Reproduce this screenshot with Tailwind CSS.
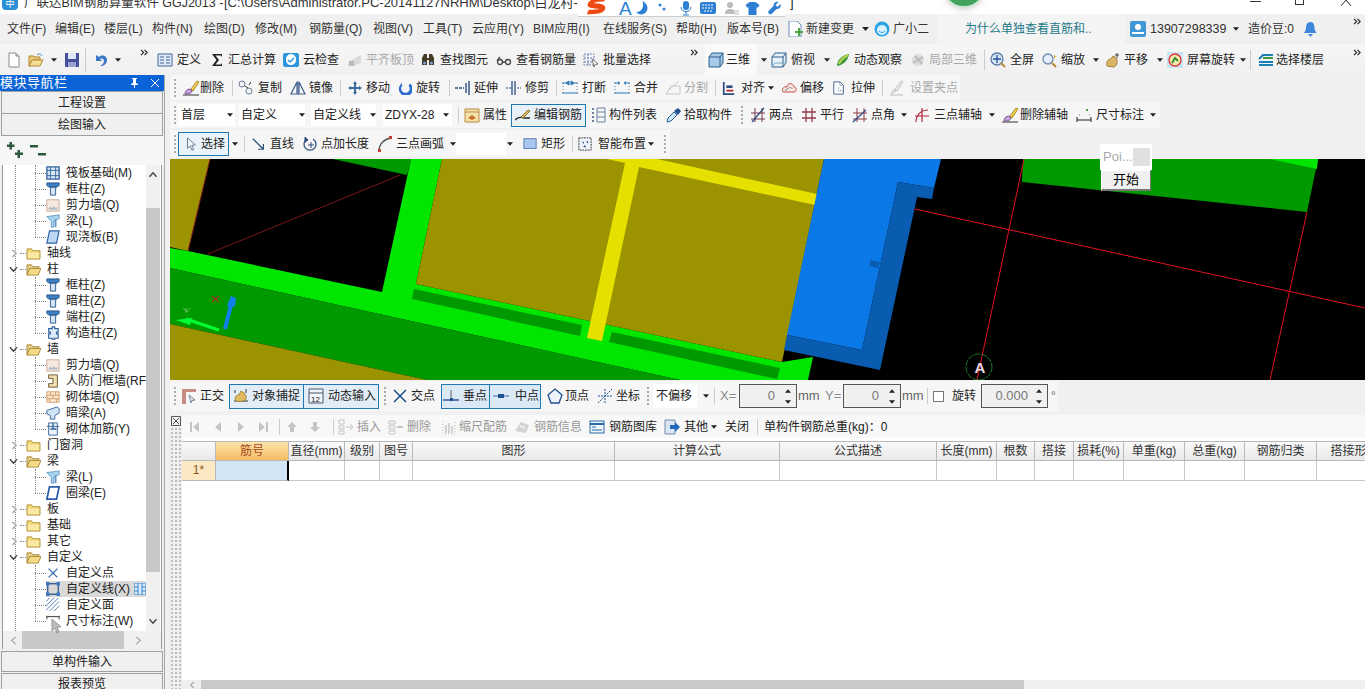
<!DOCTYPE html>
<html lang="zh">
<head>
<meta charset="UTF-8" />
<title>广联达BIM钢筋算量软件 GGJ2013</title>
<script src="https://cdn.jsdelivr.net/npm/@tailwindcss/browser@4"></script>
</head>
<body class="relative w-[1365px] h-[689px] overflow-hidden bg-[#f0f0f0] text-[12px] leading-4 text-[#222] font-['Liberation_Sans','Noto_Sans_CJK_SC',sans-serif]">

<svg class="hidden">
  <defs>
    <symbol id="caret" viewBox="0 0 7 4"><path d="M0 0h7L3.500 4z" fill="#222"/></symbol>
    <symbol id="more" viewBox="0 0 10 8"><path d="M1 1l3 3-3 3M5 1l3 3-3 3" fill="none" stroke="#222" stroke-width="1.300"/></symbol>
    <symbol id="grip" viewBox="0 0 3 20"><path d="M1 1v18" stroke="#aaa" stroke-width="2" stroke-dasharray="2 2"/></symbol>
    <symbol id="newfile" viewBox="0 0 16 16"><path d="M3 1h7l3 3v11H3z" fill="#fff" stroke="#8a8a8a"/><path d="M10 1v3h3" fill="#ddd" stroke="#8a8a8a"/></symbol>
    <symbol id="open" viewBox="0 0 16 16"><path d="M1 4h5l1 1h5v3H5L2 14H1z" fill="#e9c877" stroke="#b28a33"/><path d="M4 8h11l-3 6H1z" fill="#f6dd96" stroke="#b28a33"/><path d="M9 3c2-2 4-1 5 1" fill="none" stroke="#3f7fc0"/></symbol>
    <symbol id="save" viewBox="0 0 16 16"><path d="M1 1h14v14H1z" fill="#46509c"/><path d="M4 1h8v6H4z" fill="#dfe6f5"/><path d="M4 10h8v5H4z" fill="#9aa3d0"/></symbol>
    <symbol id="undo" viewBox="0 0 16 16"><path d="M3 3v6h6L7 7c2-1 4 0 4 2 0 2-2 4-4 5 4 0 7-2 7-6 0-4-5-6-8-3z" fill="#3a78c8"/></symbol>
    <symbol id="def" viewBox="0 0 16 16"><path d="M1 2h14v12H1z" fill="#dfe9f7" stroke="#41699c"/><path d="M3 5h4M3 8h4M3 11h4M9 5h4M9 8h4M9 11h4" stroke="#41699c"/></symbol>
    <symbol id="sigma" viewBox="0 0 16 16"><path d="M3 2h10v3l-1-1.500H6.500L10 8l-3.500 4.500H12l1-1.500v3H3l4.500-6z" fill="#222"/></symbol>
    <symbol id="cloudcheck" viewBox="0 0 16 16"><rect x="0" y="1" width="16" height="14" rx="2" fill="#2d95dc"/><path d="M3 7a5 5 0 0110 0 5 5 0 01-10 2z" fill="#fff"/><path d="M5 8l2 2 4-4" fill="none" stroke="#2d95dc" stroke-width="1.500"/></symbol>
    <symbol id="flat" viewBox="0 0 16 16"><path d="M1 13l6-6 8-4v8l-8 3z" fill="#d9d9d9"/><path d="M3 14V9h5v5z" fill="#bbb"/></symbol>
    <symbol id="binoc" viewBox="0 0 16 16"><path d="M2 6l2-4h3v4h2V2h3l2 4v7h-5V8H7v5H2z" fill="#453a24"/><circle cx="4.500" cy="11" r="1.500" fill="#78a4d8"/><circle cx="11.500" cy="11" r="1.500" fill="#78a4d8"/></symbol>
    <symbol id="glasses" viewBox="0 0 16 16"><circle cx="4" cy="10" r="2.500" fill="none" stroke="#444" stroke-width="1.300"/><circle cx="12" cy="10" r="2.500" fill="none" stroke="#444" stroke-width="1.300"/><path d="M6.500 10h3M1 9l3-4" stroke="#444" stroke-width="1.300"/></symbol>
    <symbol id="batch" viewBox="0 0 16 16"><path d="M1 2h10v11H1zM1 6h10M1 10h10M5 2v11" fill="#eef2fa" stroke="#7a86a8" stroke-dasharray="2 1"/><path d="M9 7l6 5-3 .5-1 2.500z" fill="#fff" stroke="#777"/></symbol>
    <symbol id="cube" viewBox="0 0 16 16"><path d="M1 5l3-4h11v10l-3 4H1z" fill="#a6cbe9" stroke="#2f5f8c"/><path d="M1 5h11v10M12 5l3-4" fill="none" stroke="#2f5f8c"/></symbol>
    <symbol id="cubev" viewBox="0 0 16 16"><path d="M1 5l3-4h11v10l-3 4H1z" fill="#e6f1fa" stroke="#2f5f8c"/><path d="M1 5h11v10M12 5l3-4" fill="none" stroke="#2f5f8c"/><path d="M1 15l3-4h11" fill="none" stroke="#7fa8c9"/></symbol>
    <symbol id="orbit" viewBox="0 0 16 16"><path d="M2 14c0-6 5-11 12-12-1 6-5 11-12 12z" fill="#3d9a3d"/><path d="M4 12c2-5 5-7 9-9" stroke="#b8d44c" stroke-width="2" fill="none"/></symbol>
    <symbol id="local3d" viewBox="0 0 16 16"><circle cx="8" cy="8" r="6" fill="#ddd"/><path d="M3 11L13 5M5 4l7 8" stroke="#bbb" stroke-width="2"/></symbol>
    <symbol id="zoomfit" viewBox="0 0 16 16"><circle cx="7" cy="7" r="6" fill="#d6e6f7" stroke="#5d7ba6" stroke-width="1.300"/><path d="M7 3v8M3 7h8" stroke="#24509a" stroke-width="1.300"/><path d="M11 11l4 4" stroke="#b88c2c" stroke-width="2"/></symbol>
    <symbol id="zoom" viewBox="0 0 16 16"><circle cx="6" cy="7" r="5" fill="#e5eefa" stroke="#6f88ad" stroke-width="1.300"/><path d="M10 11l4 4" stroke="#b88c2c" stroke-width="2"/><path d="M12 2l1 2 2 .500-2 .500-1 2z" fill="#d1a326"/></symbol>
    <symbol id="pan" viewBox="0 0 16 16"><path d="M2 14c-1-4 1-7 4-7l2-3 2 1 2 3v3c0 2-2 4-4 4z" fill="#d9b466" stroke="#a28334"/><path d="M12 1v5M10 3h4" stroke="#345" /></symbol>
    <symbol id="screenrot" viewBox="0 0 16 16"><rect x="0" y="0" width="16" height="16" fill="#c8e4f2"/><circle cx="8" cy="8" r="6" fill="#f4e8b0" stroke="#d33" stroke-width="1.300"/><path d="M5 11l3-5 3 3" stroke="#2f8f35" stroke-width="2" fill="none"/></symbol>
    <symbol id="floors" viewBox="0 0 16 16"><path d="M1 7l4-4h10M1 10h14M1 13h14" fill="none" stroke="#197fb4" stroke-width="2"/><path d="M5 6h10" stroke="#3f9a42" stroke-width="2"/></symbol>
    <symbol id="brush" viewBox="0 0 18 16"><path d="M1 15h16" stroke="#333"/><path d="M3 14c0-3 2-5 5-5l2 2c0 2-3 3-7 3z" fill="#c9a1dd" stroke="#7e579b"/><path d="M9 9l6-8 2 1-6 9z" fill="#f2d24f" stroke="#a88a2c"/></symbol>
    <symbol id="copy" viewBox="0 0 16 16"><circle cx="4" cy="4" r="3" fill="none" stroke="#6b7d99"/><circle cx="11" cy="11" r="3" fill="none" stroke="#6b7d99"/><path d="M7 6l3 2M13 2l-2 3" stroke="#333"/></symbol>
    <symbol id="mirror" viewBox="0 0 16 16"><path d="M7 2L1 14h6zM9 2l6 12H9z" fill="none" stroke="#3f5f90" stroke-width="1.200"/><path d="M8 1v14" stroke="#3f5f90"/></symbol>
    <symbol id="move" viewBox="0 0 16 16"><path d="M8 1l2 3H9v3h3V6l3 2-3 2V9H9v3h1l-2 3-2-3h1V9H4v1L1 8l3-2v1h3V4H6z" fill="#3a6c99"/></symbol>
    <symbol id="rotate" viewBox="0 0 16 16"><path d="M4 2l1 3a5 5 0 107 0l2-2a8 8 0 11-11 1z" fill="#2e6bd0"/></symbol>
    <symbol id="extend" viewBox="0 0 16 16"><path d="M14 1v14M11 3v10" stroke="#2c4e84" stroke-width="1.400"/><path d="M0 8h9" stroke="#2c4e84" stroke-width="1.400" stroke-dasharray="3 1"/></symbol>
    <symbol id="trim" viewBox="0 0 16 16"><path d="M6 1v14M9 1v14" stroke="#2c4e84" stroke-width="1.300"/><path d="M0 8h6M11 8h4" stroke="#2c4e84" stroke-dasharray="2 1"/></symbol>
    <symbol id="break" viewBox="0 0 16 16"><path d="M0 3h5M11 3h5M0 13h16M4 3l3-2v4zM12 3L9 1v4z" fill="#2a77b4" stroke="#2a77b4"/><path d="M1 3v10M15 3v10" stroke="#6a7f9c" stroke-dasharray="1 2"/></symbol>
    <symbol id="merge" viewBox="0 0 16 16"><path d="M0 3h6M10 3h6M0 13h16" stroke="#2a77b4"/><path d="M6 3L4 1v4zM10 3l2-2v4z" fill="#2a77b4"/><path d="M1 3v10M15 3v10" stroke="#6a7f9c" stroke-dasharray="1 2"/></symbol>
    <symbol id="split" viewBox="0 0 16 16"><path d="M1 14l5-8h9M1 14h14V6M4 10l10-9" fill="none" stroke="#c8c8c8"/></symbol>
    <symbol id="align" viewBox="0 0 16 16"><path d="M2 1v14h12" fill="none" stroke="#2b4d85" stroke-width="2"/><path d="M5 5h7v3H5z" fill="#2b4d85"/><path d="M5 11h8" stroke="#b5232f" stroke-width="2"/></symbol>
    <symbol id="offset" viewBox="0 0 16 16"><path d="M2 12c-2-4 2-6 4-5 0-4 6-5 7 0 3 0 3 5 0 5z" fill="#f8e6e2" stroke="#c2504a"/><path d="M5 11c-1-2 1-2 2-2 0-2 4-2 4 0" fill="none" stroke="#888"/></symbol>
    <symbol id="stretch" viewBox="0 0 16 16"><path d="M2 1h7l4 4v10H2z" fill="#fff" stroke="#3b5c8c"/><path d="M9 1v4h4M7 8h2M7 11h5" fill="none" stroke="#3b5c8c" stroke-dasharray="1 1"/></symbol>
    <symbol id="setgrip" viewBox="0 0 16 16"><path d="M2 15h13" stroke="#bbb"/><path d="M3 14l3-5 2 2zM7 9l6-8 2 1-6 9z" fill="#e8e8e8" stroke="#c6c6c6"/></symbol>
    <symbol id="prop" viewBox="0 0 16 16"><path d="M1 2h14v13H1z" fill="#f6e2ae" stroke="#b6893c"/><path d="M1 5h14" stroke="#b6893c"/><path d="M4 11l4-3 4 3-4 2z" fill="#c96f2a"/></symbol>
    <symbol id="edit" viewBox="0 0 16 16"><path d="M0 13c3-3 6-3 9-2h6" fill="none" stroke="#222" stroke-width="1.300"/><path d="M6 10l7-7 2 1-7 7z" fill="#e0bd5a" stroke="#8c7131"/></symbol>
    <symbol id="list" viewBox="0 0 16 16"><path d="M7 1h8v14H7zM7 5h8M7 10h8" fill="none" stroke="#68809f"/><path d="M2 2h2M2 6h2M2 10h2M2 14h2" stroke="#68809f" stroke-width="2"/></symbol>
    <symbol id="pick" viewBox="0 0 16 16"><path d="M1 15l1-4 6-6 3 3-6 6z" fill="#cfe6f6" stroke="#2e5f98"/><path d="M8 4l4-3 3 3-3 4z" fill="#1f4f8c"/></symbol>
    <symbol id="twopts" viewBox="0 0 16 16"><path d="M1 6h14M1 12h14M5 1v14M12 1v14" stroke="#7a3a4a"/><path d="M2 15L14 1" stroke="#2c4e84" stroke-width="1.300"/></symbol>
    <symbol id="parallel" viewBox="0 0 16 16"><path d="M1 5h14M1 11h14M5 1v14M11 1v14" stroke="#943a4a" stroke-width="1.300"/></symbol>
    <symbol id="angle" viewBox="0 0 16 16"><path d="M1 6h14M1 12h14M5 1v14M12 1v14" stroke="#943a4a"/><path d="M1 15L14 3" stroke="#2c4e84" stroke-width="1.300"/></symbol>
    <symbol id="arcaxis" viewBox="0 0 16 16"><path d="M2 15C2 8 7 3 14 3M1 9h14M8 1v14" fill="none" stroke="#b0243a" stroke-width="1.200"/></symbol>
    <symbol id="dim" viewBox="0 0 16 16"><path d="M1 10v5M15 10v5M1 13h14" stroke="#222"/><path d="M10 2h2v2h-2z" fill="#4a9c4c"/><path d="M3 8h2M13 8h2" stroke="#4a9c4c" stroke-dasharray="1 1"/></symbol>
    <symbol id="cursor" viewBox="0 0 16 16"><path d="M4 1l9 8-4 .500 2 5-2 .500-2-5-3 3z" fill="#f4f8fd" stroke="#5b6f88"/></symbol>
    <symbol id="line" viewBox="0 0 16 16"><path d="M1 2l12 12M13 8v6H7" fill="none" stroke="#2e4d7c" stroke-width="1.400"/></symbol>
    <symbol id="ptlen" viewBox="0 0 16 16"><path d="M5 3a6 6 0 106 0" fill="none" stroke="#2e4d7c" stroke-width="1.300"/><path d="M3 1l3 3-3 2zM6 9h6M9 6v6" stroke="#2e4d7c" fill="#2e4d7c"/></symbol>
    <symbol id="arc3" viewBox="0 0 16 16"><path d="M2 15C2 8 7 3 14 2" fill="none" stroke="#555" stroke-width="1.300"/><path d="M1 13h3v3H1zM12 0h3v3h-3z" fill="#c43d3d"/></symbol>
    <symbol id="rect" viewBox="0 0 16 16"><rect x="1" y="2" width="14" height="11" fill="#a9c7ee" stroke="#4f74ad"/></symbol>
    <symbol id="smart" viewBox="0 0 16 16"><path d="M1 1h14v14H1z" fill="#eef3fb" stroke="#222" stroke-dasharray="2 1"/><path d="M5 5l2 1-1 2zM10 4l2 2-2 1zM6 11l2-2 1 3z" fill="#1d3f78"/></symbol>
    <symbol id="ortho" viewBox="0 0 16 16"><path d="M1 1h14v3H5v12H1z" fill="#c78b82"/><path d="M8 7l6 5-3 .500-1 2.500z" fill="#dfe6ee" stroke="#78899c"/></symbol>
    <symbol id="snap" viewBox="0 0 16 16"><path d="M2 2v3M1 13h14" stroke="#333"/><path d="M3 13c-2-3 0-6 3-6l2-4 3 2 2 3v3c-1 2-7 3-10 2z" fill="#e3bb60" stroke="#a38534"/><path d="M13 1v4" stroke="#333"/></symbol>
    <symbol id="dyn" viewBox="0 0 16 16"><path d="M1 1h14v14H1zM1 5h14" fill="#f2f5f9" stroke="#47576e"/><text x="3" y="14" font-size="8" font-family="Liberation Sans" fill="#222">12</text></symbol>
    <symbol id="cross" viewBox="0 0 16 16"><path d="M2 2l12 12M14 2L2 14" stroke="#20508e" stroke-width="1.500"/></symbol>
    <symbol id="perp" viewBox="0 0 16 16"><path d="M0 12h16" stroke="#20508e" stroke-width="1.400"/><path d="M8 2v10" stroke="#666"/><path d="M7 10h3v3H7z" fill="#20508e"/></symbol>
    <symbol id="mid" viewBox="0 0 16 16"><path d="M0 8h16" stroke="#5a7fb0" stroke-width="1.200"/><path d="M5 6h6v4H5z" fill="#20508e"/></symbol>
    <symbol id="vertex" viewBox="0 0 16 16"><path d="M8 1l7 6-3 8H4L1 7z" fill="#eef4fb" stroke="#20508e" stroke-width="1.300"/></symbol>
    <symbol id="coord" viewBox="0 0 16 16"><path d="M8 1v14M1 8h14" stroke="#20508e" stroke-dasharray="2 1"/><path d="M1 15L8 8l7-7" stroke="#20508e" stroke-dasharray="2 1"/></symbol>
    <symbol id="first" viewBox="0 0 12 12"><path d="M2 1h2v10H2zM11 1v10L5 6z" fill="#c4c4c4"/></symbol>
    <symbol id="prev" viewBox="0 0 12 12"><path d="M9 1v10L3 6z" fill="#c4c4c4"/></symbol>
    <symbol id="next" viewBox="0 0 12 12"><path d="M3 1v10l6-5z" fill="#c4c4c4"/></symbol>
    <symbol id="last" viewBox="0 0 12 12"><path d="M8 1h2v10H8zM1 1v10l6-5z" fill="#c4c4c4"/></symbol>
    <symbol id="up" viewBox="0 0 12 12"><path d="M6 1l5 5H8v5H4V6H1z" fill="#c4c4c4"/></symbol>
    <symbol id="down" viewBox="0 0 12 12"><path d="M6 11L1 6h3V1h4v5h3z" fill="#c4c4c4"/></symbol>
    <symbol id="ins" viewBox="0 0 16 16"><path d="M1 1h5v4H1zM1 7h5v3H1zM1 12h5v3H1z" fill="none" stroke="#c4c4c4"/><path d="M8 8h7M12 5l3 3-3 3" fill="none" stroke="#c4c4c4"/></symbol>
    <symbol id="del" viewBox="0 0 16 16"><path d="M1 2h6v3H1zM1 7h6v3H1zM1 12h6v3H1z" fill="none" stroke="#c4c4c4"/><path d="M9 8h6" stroke="#c4c4c4" stroke-width="2"/></symbol>
    <symbol id="scale" viewBox="0 0 16 16"><path d="M2 2v13h12V2" fill="none" stroke="#bbb" stroke-dasharray="1 2"/><path d="M5 6v8M8 4v10M11 7v7" stroke="#c4c4c4" stroke-width="1.500"/></symbol>
    <symbol id="info" viewBox="0 0 16 16"><path d="M1 12l6-9 8 3-3 8z" fill="#d2d2d2"/><path d="M6 7l5 2" stroke="#eee" stroke-width="2"/></symbol>
    <symbol id="lib" viewBox="0 0 16 16"><rect x="1" y="2" width="14" height="12" fill="#eef4fb" stroke="#2b6aa4"/><path d="M1 5h14" stroke="#2b6aa4" stroke-width="2"/><path d="M3 8h4M3 11h10" stroke="#2b6aa4"/></symbol>
    <symbol id="other" viewBox="0 0 16 16"><path d="M1 1h10v14H1z" fill="#dbe6f4" stroke="#7389a8"/><path d="M6 6h5V3l5 5-5 5v-3H6z" fill="#2168c1"/></symbol>
    <symbol id="folder" viewBox="0 0 16 14"><path d="M1 2h5l1 2h8v9H1z" fill="#f7d977" stroke="#b09040"/><path d="M2 6h12v6H2z" fill="#fbe9a6"/></symbol>
    <symbol id="folderopen" viewBox="0 0 16 14"><path d="M1 2h5l1 2h7v2H4l-3 7z" fill="#e9cf83" stroke="#a78a3d"/><path d="M4 6h12l-3 7H1z" fill="#f7dd85" stroke="#a78a3d"/></symbol>
    <symbol id="column" viewBox="0 0 16 16"><path d="M1 1h14v3l-3 2H4L1 4z" fill="#3f7fbf" stroke="#224f85"/><path d="M5 6h6v9H5z" fill="#cfe3f5" stroke="#224f85"/></symbol>
    <symbol id="shear" viewBox="0 0 16 16"><path d="M1 2h14v13H1z" fill="#f7e8df" stroke="#c9a794"/><path d="M3 12l2-2 2 2 2-3 2 3 2-2v3H3z" fill="#a7b7c9"/></symbol>
    <symbol id="beam" viewBox="0 0 16 16"><path d="M1 3l14-2v4L9 8v7H6V8z" fill="#a9d4ef" stroke="#5f96bf"/><path d="M11 6v9" stroke="#5f96bf" stroke-width="2"/></symbol>
    <symbol id="slab" viewBox="0 0 16 16"><path d="M4 1h11l-3 14H1z" fill="#bcd8f3" stroke="#2a5da8" stroke-width="1.300"/></symbol>
    <symbol id="ring" viewBox="0 0 16 16"><path d="M4 1h11l-3 14H1z" fill="#fff" stroke="#2a5da8" stroke-width="2"/></symbol>
    <symbol id="raft" viewBox="0 0 16 16"><path d="M1 1h14v14H1z" fill="#d9e8f7" stroke="#2f5f98" stroke-width="1.500"/><path d="M1 5h14M1 11h14M5 1v14M11 1v14" stroke="#2f5f98"/></symbol>
    <symbol id="struct" viewBox="0 0 16 16"><path d="M3 3h4V1h3v2h4v4h-2v2h2v5h-4v1H7v-1H3V9h2V7H3z" fill="#dcebf9" stroke="#2c5e9b" stroke-width="1.200"/></symbol>
    <symbol id="civil" viewBox="0 0 16 16"><path d="M3 1h10v14H3V11h5V5H3z" fill="#f3e0b4" stroke="#5d4a20"/></symbol>
    <symbol id="brick" viewBox="0 0 16 16"><path d="M1 2h14v12H1z" fill="#fbe6cc" stroke="#cf9a6a"/><path d="M1 6h14M1 10h14M5 2v4M11 2v4M8 6v4M4 10v4M12 10v4" stroke="#cf9a6a"/></symbol>
    <symbol id="hidden" viewBox="0 0 16 16"><path d="M1 5l12-4 2 2v5l-5 3v4H5v-4L1 9z" fill="#cfe3f5" stroke="#315f96"/></symbol>
    <symbol id="wallrebar" viewBox="0 0 16 16"><path d="M1 5h14M3 1h10v14H3z" fill="#eaf2fb" stroke="#315f96"/><path d="M8 1v7M5 8h7" stroke="#315f96" stroke-width="1.500"/></symbol>
    <symbol id="point" viewBox="0 0 16 16"><path d="M3 3l10 10M13 3L3 13" stroke="#3a6ea8" stroke-width="1.500"/><circle cx="8" cy="8" r="1.500" fill="#3a6ea8"/></symbol>
    <symbol id="cline" viewBox="0 0 16 16"><rect x="2" y="2" width="12" height="12" fill="none" stroke="#254d8e" stroke-width="1.400"/><path d="M0 0h4v4H0zM12 0h4v4h-4zM0 12h4v4H0zM12 12h4v4h-4z" fill="#3f78c0"/></symbol>
    <symbol id="csurf" viewBox="0 0 16 16"><path d="M0 4l4-4M0 9l9-9M0 14L14 0M4 15L15 4M9 15l6-6" stroke="#3f70ac"/></symbol>
    <symbol id="dimtree" viewBox="0 0 16 16"><path d="M1 2v4M15 2v4M1 3h14" stroke="#222"/></symbol>
    <symbol id="chev" viewBox="0 0 10 8"><path d="M1 1.500L5 6l4-4.500" fill="none" stroke="#444" stroke-width="1.600"/></symbol>
    <symbol id="chevr" viewBox="0 0 8 10"><path d="M1.500 1L6 5l-4.500 4" fill="none" stroke="#aaa" stroke-width="1.600"/></symbol>
  </defs>
</svg>

<!-- title bar -->
<header class="flex h-[14px] bg-white overflow-hidden [&>*]:shrink-0">
  <span class="w-[16px] h-[10px] ml-[2px] rounded-b-sm bg-[#2c8fd8] text-white text-[9px] leading-[8px] text-center">中</span>
  <span class="w-[200px] ml-[6px] text-[12.5px] leading-[14px] -mt-[4px] whitespace-nowrap text-[#333]">广联达BIM钢筋算量软件 GGJ2013 - </span>
  <span class="w-[354px] overflow-hidden text-[13px] leading-[14px] -mt-[4px] whitespace-nowrap text-[#333]">[C:\Users\Administrator.PC-20141127NRHM\Desktop\白龙村-</span>
  <span class="ml-[212px] text-[13px] leading-[14px] -mt-[4px]">]</span>
  <span class="ml-auto flex w-[115px] items-start">
    <span class="w-[11px] h-px mt-[1px] bg-[#333]"></span>
    <span class="w-[9px] h-[5px] ml-[34px] border-x border-b border-[#333]"></span>
    <svg class="w-[11px] h-[6px] ml-[37px]" viewBox="0 0 11 6"><path d="M0 6l5-6 5 6" fill="none" stroke="#333"/></svg>
  </span>
</header>

<!-- menu -->
<nav class="flex items-center h-[30px] whitespace-nowrap text-[#333] bg-[#f0f0f0] [&>*]:shrink-0">
  <span class="w-[48px] ml-[7px]">文件(F)</span>
  <span class="w-[49px]">编辑(E)</span>
  <span class="w-[48px]">楼层(L)</span>
  <span class="w-[52px]">构件(N)</span>
  <span class="w-[51px]">绘图(D)</span>
  <span class="w-[54px]">修改(M)</span>
  <span class="w-[64px]">钢筋量(Q)</span>
  <span class="w-[50px]">视图(V)</span>
  <span class="w-[49px]">工具(T)</span>
  <span class="w-[61px]">云应用(Y)</span>
  <span class="w-[70px]">BIM应用(I)</span>
  <span class="w-[73px]">在线服务(S)</span>
  <span class="w-[51px]">帮助(H)</span>
  <span class="w-[60px]">版本号(B)</span>
  <svg class="w-4 h-4 mr-[3px]" viewBox="0 0 16 16"><path d="M2 0h8l4 4v12H2z" fill="#fff" stroke="#6a8fc0"/><path d="M8 10h3V7h2v3h3v2h-3v3h-2v-3H8z" fill="#4aa53a"/></svg>
  <span class="w-[56px]">新建变更</span>
  <svg class="w-[7px] h-1 mr-[5px]"><use href="#caret"/></svg>
  <svg class="w-4 h-4 mr-[3px]" viewBox="0 0 16 16"><circle cx="8" cy="8" r="7.500" fill="#2ea4e6"/><circle cx="8" cy="9" r="5" fill="#d8f1fb"/><path d="M5 10c2 2 4 2 6 0" stroke="#2ea4e6" fill="none"/></svg>
  <span class="w-[44px]">广小二</span>
  <span class="w-[188px] pl-[28px] text-[#1f7a8a] self-stretch flex items-center bg-[#f4f4f4]">为什么单独查看直筋和..</span>
  <span class="w-[5px]"></span>
  <svg class="w-4 h-4 mr-[4px]" viewBox="0 0 16 16"><rect width="16" height="16" rx="2" fill="#3f97d8"/><circle cx="8" cy="6" r="3" fill="#fff"/><path d="M2 13h12v-2H2z" fill="#fff"/></svg>
  <span class="w-[76px] text-[12.5px]">13907298339</span>
  <svg class="w-[6px] h-1 ml-[7px] mr-[9px]"><use href="#caret"/></svg>
  <span class="w-[46px]">造价豆:0</span>
  <svg class="w-[13px] h-[15px] ml-[10px]" viewBox="0 0 13 15"><path d="M6.500 0c3 0 4 3 4 6s2 4 2 5H0c0-1 2-2 2-5s1-6 4.500-6z" fill="#3f87dc"/><path d="M4 12h5l-2.500 3z" fill="#3f87dc"/></svg>
  <svg class="w-[9px] h-[7px] ml-[36px] self-start mt-[4px]"><use href="#more"/></svg>
</nav>

<!-- main toolbar -->
<div class="flex items-center h-[31px] whitespace-nowrap bg-gradient-to-b from-[#f6f6f6] to-[#f0f0f0] [&>*]:shrink-0">
  <svg class="w-4 h-4 ml-[6px]"><use href="#newfile"/></svg>
  <svg class="w-4 h-4 ml-[6px]"><use href="#open"/></svg>
  <svg class="w-[6px] h-1 ml-[7px]"><use href="#caret"/></svg>
  <svg class="w-4 h-4 ml-[7px]"><use href="#save"/></svg>
  <span class="w-px h-6 ml-[5px] bg-[#ccc]"></span>
  <svg class="w-4 h-4 ml-[7px]"><use href="#undo"/></svg>
  <svg class="w-[6px] h-1 ml-[6px]"><use href="#caret"/></svg>
  <svg class="w-[9px] h-[7px] ml-[19px] self-start mt-[5px]"><use href="#more"/></svg>
  <svg class="w-4 h-4 ml-[8px]"><use href="#def"/></svg>
  <span class="w-[24px] ml-[4px]">定义</span>
  <svg class="w-4 h-4 ml-[8px]"><use href="#sigma"/></svg>
  <span class="w-[48px] ml-[3px]">汇总计算</span>
  <svg class="w-4 h-4 ml-[7px]"><use href="#cloudcheck"/></svg>
  <span class="w-[36px] ml-[4px]">云检查</span>
  <svg class="w-4 h-4 ml-[7px]"><use href="#flat"/></svg>
  <span class="w-[48px] ml-[4px] text-[#a8a8a8]">平齐板顶</span>
  <svg class="w-4 h-4 ml-[6px]"><use href="#binoc"/></svg>
  <span class="w-[48px] ml-[4px]">查找图元</span>
  <svg class="w-4 h-4 ml-[8px]"><use href="#glasses"/></svg>
  <span class="w-[60px] ml-[4px]">查看钢筋量</span>
  <svg class="w-4 h-4 ml-[7px]"><use href="#batch"/></svg>
  <span class="w-[48px] ml-[4px]">批量选择</span>
  <svg class="w-[9px] h-[7px] ml-[39px] self-start mt-[5px]"><use href="#more"/></svg>
  <span class="flex items-center self-stretch bg-[#fafafa] w-[52px] ml-[6px] pl-[3px]">
    <svg class="w-4 h-4"><use href="#cube"/></svg>
    <span class="ml-[2px]">三维</span>
  </span>
  <svg class="w-[6px] h-1 ml-[4px]"><use href="#caret"/></svg>
  <svg class="w-4 h-4 ml-[4px]"><use href="#cubev"/></svg>
  <span class="w-[24px] ml-[4px]">俯视</span>
  <svg class="w-[6px] h-1 ml-[9px]"><use href="#caret"/></svg>
  <svg class="w-4 h-4 ml-[5px]"><use href="#orbit"/></svg>
  <span class="w-[48px] ml-[3px]">动态观察</span>
  <svg class="w-4 h-4 ml-[8px]"><use href="#local3d"/></svg>
  <span class="w-[48px] ml-[3px] text-[#a8a8a8]">局部三维</span>
  <span class="w-px h-5 ml-[7px] bg-[#ccc]"></span>
  <svg class="w-4 h-4 ml-[5px]"><use href="#zoomfit"/></svg>
  <span class="w-[24px] ml-[4px]">全屏</span>
  <svg class="w-4 h-4 ml-[8px]"><use href="#zoom"/></svg>
  <span class="w-[24px] ml-[3px]">缩放</span>
  <svg class="w-[6px] h-1 ml-[8px]"><use href="#caret"/></svg>
  <svg class="w-4 h-4 ml-[6px]"><use href="#pan"/></svg>
  <span class="w-[24px] ml-[3px]">平移</span>
  <svg class="w-[6px] h-1 ml-[9px]"><use href="#caret"/></svg>
  <svg class="w-4 h-4 ml-[4px]"><use href="#screenrot"/></svg>
  <span class="w-[48px] ml-[4px]">屏幕旋转</span>
  <svg class="w-[6px] h-1 ml-[5px]"><use href="#caret"/></svg>
  <span class="w-px h-5 ml-[4px] bg-[#ccc]"></span>
  <svg class="w-4 h-4 ml-[7px]"><use href="#floors"/></svg>
  <span class="w-[48px] ml-[2px]">选择楼层</span>
  <svg class="w-[9px] h-[7px] ml-[29px] self-start mt-[5px]"><use href="#more"/></svg>
</div>

<!-- body -->
<div class="flex h-[614px] overflow-hidden">
  <aside class="flex flex-col w-[165px] shrink-0 border-r border-[#a8a8a8] overflow-hidden [&>*]:shrink-0">
    <div class="flex items-center h-[16px] bg-[#0b63d8] text-white text-[13px] tracking-[0.5px]">
      <span>模块导航栏</span>
      <svg class="w-[9px] h-[10px] ml-auto" viewBox="0 0 9 10"><path d="M2 0h5v1H6v4l2 1v1H5v3H4V7H1V6l2-1V1H2z" fill="#fff"/></svg>
      <svg class="w-[8px] h-[8px] ml-[12px] mr-[5px]" viewBox="0 0 8 8"><path d="M0 0l8 8M8 0L0 8" stroke="#fff"/></svg>
    </div>
    <div class="flex items-center justify-center h-[23px] mx-px bg-[#f0f0f0] border border-[#a0a0a0]">工程设置</div>
    <div class="flex items-center justify-center h-[22px] mx-px bg-[#f0f0f0] border-x border-b border-[#a0a0a0]">绘图输入</div>
    <div class="flex items-center h-[29px] pl-[7px] gap-[6px] bg-[#f6f6f6]">
      <svg class="w-[17px] h-[17px]" viewBox="0 0 17 17"><path d="M2.500 0h2.500v2.500h2.500V5H5v2.500H2.500V5H0V2.500h2.500zM10.500 8H13v2.500h3V13h-3v3h-2.500v-3H8v-2.500h2.500z" fill="#2d5a3d"/></svg>
      <svg class="w-[17px] h-[17px]" viewBox="0 0 17 17"><path d="M0 3h8v2.500H0zM8 11h8v2.500H8z" fill="#2d5a3d"/></svg>
    </div>

    <div class="relative h-[484px] mx-[2px] bg-white border-x border-[#999] overflow-hidden">
      <span class="absolute left-[12px] top-0 h-[470px] border-l border-dotted border-[#888]"></span>
      <span class="absolute left-[32px] top-0 h-[72px] border-l border-dotted border-[#888]"></span>
      <span class="absolute left-[32px] top-[112px] h-[56px] border-l border-dotted border-[#888]"></span>
      <span class="absolute left-[32px] top-[192px] h-[72px] border-l border-dotted border-[#888]"></span>
      <span class="absolute left-[32px] top-[304px] h-[24px] border-l border-dotted border-[#888]"></span>
      <span class="absolute left-[32px] top-[400px] h-[56px] border-l border-dotted border-[#888]"></span>

      <div class="relative w-[143px] overflow-hidden whitespace-nowrap">
        <div class="flex items-center h-4 pl-[32px]"><span class="w-[11px] border-t border-dotted border-[#888]"></span><svg class="w-[14px] h-[14px]"><use href="#raft"/></svg><span class="ml-[6px]">筏板基础(M)</span></div>
        <div class="flex items-center h-4 pl-[32px]"><span class="w-[11px] border-t border-dotted border-[#888]"></span><svg class="w-[14px] h-[14px]"><use href="#column"/></svg><span class="ml-[6px]">框柱(Z)</span></div>
        <div class="flex items-center h-4 pl-[32px]"><span class="w-[11px] border-t border-dotted border-[#888]"></span><svg class="w-[14px] h-[14px]"><use href="#shear"/></svg><span class="ml-[6px]">剪力墙(Q)</span></div>
        <div class="flex items-center h-4 pl-[32px]"><span class="w-[11px] border-t border-dotted border-[#888]"></span><svg class="w-[14px] h-[14px]"><use href="#beam"/></svg><span class="ml-[6px]">梁(L)</span></div>
        <div class="flex items-center h-4 pl-[32px]"><span class="w-[11px] border-t border-dotted border-[#888]"></span><svg class="w-[14px] h-[14px]"><use href="#slab"/></svg><span class="ml-[6px]">现浇板(B)</span></div>

        <div class="flex items-center h-4 pl-[8px]"><svg class="w-[7px] h-[9px]"><use href="#chevr"/></svg><span class="w-[6px] ml-[2px] border-t border-dotted border-[#888]"></span><svg class="w-[15px] h-[13px]"><use href="#folder"/></svg><span class="ml-[6px]">轴线</span></div>
        <div class="flex items-center h-4 pl-[6px]"><svg class="w-[9px] h-[7px]"><use href="#chev"/></svg><span class="w-[6px] ml-[2px] border-t border-dotted border-[#888]"></span><svg class="w-[15px] h-[13px]"><use href="#folderopen"/></svg><span class="ml-[6px]">柱</span></div>
        <div class="flex items-center h-4 pl-[32px]"><span class="w-[11px] border-t border-dotted border-[#888]"></span><svg class="w-[14px] h-[14px]"><use href="#column"/></svg><span class="ml-[6px]">框柱(Z)</span></div>
        <div class="flex items-center h-4 pl-[32px]"><span class="w-[11px] border-t border-dotted border-[#888]"></span><svg class="w-[14px] h-[14px]"><use href="#column"/></svg><span class="ml-[6px]">暗柱(Z)</span></div>
        <div class="flex items-center h-4 pl-[32px]"><span class="w-[11px] border-t border-dotted border-[#888]"></span><svg class="w-[14px] h-[14px]"><use href="#column"/></svg><span class="ml-[6px]">端柱(Z)</span></div>
        <div class="flex items-center h-4 pl-[32px]"><span class="w-[11px] border-t border-dotted border-[#888]"></span><svg class="w-[14px] h-[14px]"><use href="#struct"/></svg><span class="ml-[6px]">构造柱(Z)</span></div>
        <div class="flex items-center h-4 pl-[6px]"><svg class="w-[9px] h-[7px]"><use href="#chev"/></svg><span class="w-[6px] ml-[2px] border-t border-dotted border-[#888]"></span><svg class="w-[15px] h-[13px]"><use href="#folderopen"/></svg><span class="ml-[6px]">墙</span></div>
        <div class="flex items-center h-4 pl-[32px]"><span class="w-[11px] border-t border-dotted border-[#888]"></span><svg class="w-[14px] h-[14px]"><use href="#shear"/></svg><span class="ml-[6px]">剪力墙(Q)</span></div>
        <div class="flex items-center h-4 pl-[32px]"><span class="w-[11px] border-t border-dotted border-[#888]"></span><svg class="w-[14px] h-[14px]"><use href="#civil"/></svg><span class="ml-[6px]">人防门框墙(RF</span></div>
        <div class="flex items-center h-4 pl-[32px]"><span class="w-[11px] border-t border-dotted border-[#888]"></span><svg class="w-[14px] h-[14px]"><use href="#brick"/></svg><span class="ml-[6px]">砌体墙(Q)</span></div>
        <div class="flex items-center h-4 pl-[32px]"><span class="w-[11px] border-t border-dotted border-[#888]"></span><svg class="w-[14px] h-[14px]"><use href="#hidden"/></svg><span class="ml-[6px]">暗梁(A)</span></div>
        <div class="flex items-center h-4 pl-[32px]"><span class="w-[11px] border-t border-dotted border-[#888]"></span><svg class="w-[14px] h-[14px]"><use href="#wallrebar"/></svg><span class="ml-[6px]">砌体加筋(Y)</span></div>
        <div class="flex items-center h-4 pl-[8px]"><svg class="w-[7px] h-[9px]"><use href="#chevr"/></svg><span class="w-[6px] ml-[2px] border-t border-dotted border-[#888]"></span><svg class="w-[15px] h-[13px]"><use href="#folder"/></svg><span class="ml-[6px]">门窗洞</span></div>
        <div class="flex items-center h-4 pl-[6px]"><svg class="w-[9px] h-[7px]"><use href="#chev"/></svg><span class="w-[6px] ml-[2px] border-t border-dotted border-[#888]"></span><svg class="w-[15px] h-[13px]"><use href="#folderopen"/></svg><span class="ml-[6px]">梁</span></div>
        <div class="flex items-center h-4 pl-[32px]"><span class="w-[11px] border-t border-dotted border-[#888]"></span><svg class="w-[14px] h-[14px]"><use href="#beam"/></svg><span class="ml-[6px]">梁(L)</span></div>
        <div class="flex items-center h-4 pl-[32px]"><span class="w-[11px] border-t border-dotted border-[#888]"></span><svg class="w-[14px] h-[14px]"><use href="#ring"/></svg><span class="ml-[6px]">圈梁(E)</span></div>
        <div class="flex items-center h-4 pl-[8px]"><svg class="w-[7px] h-[9px]"><use href="#chevr"/></svg><span class="w-[6px] ml-[2px] border-t border-dotted border-[#888]"></span><svg class="w-[15px] h-[13px]"><use href="#folder"/></svg><span class="ml-[6px]">板</span></div>
        <div class="flex items-center h-4 pl-[8px]"><svg class="w-[7px] h-[9px]"><use href="#chevr"/></svg><span class="w-[6px] ml-[2px] border-t border-dotted border-[#888]"></span><svg class="w-[15px] h-[13px]"><use href="#folder"/></svg><span class="ml-[6px]">基础</span></div>
        <div class="flex items-center h-4 pl-[8px]"><svg class="w-[7px] h-[9px]"><use href="#chevr"/></svg><span class="w-[6px] ml-[2px] border-t border-dotted border-[#888]"></span><svg class="w-[15px] h-[13px]"><use href="#folder"/></svg><span class="ml-[6px]">其它</span></div>
        <div class="flex items-center h-4 pl-[6px]"><svg class="w-[9px] h-[7px]"><use href="#chev"/></svg><span class="w-[6px] ml-[2px] border-t border-dotted border-[#888]"></span><svg class="w-[15px] h-[13px]"><use href="#folderopen"/></svg><span class="ml-[6px]">自定义</span></div>
        <div class="flex items-center h-4 pl-[32px]"><span class="w-[11px] border-t border-dotted border-[#888]"></span><svg class="w-[14px] h-[14px]"><use href="#point"/></svg><span class="ml-[6px]">自定义点</span></div>
        <div class="flex items-center h-4 pl-[32px]"><span class="w-[11px] border-t border-dotted border-[#888]"></span><span class="flex items-center h-4 w-[100px] bg-[#d9d9d9]"><svg class="w-[14px] h-[14px]"><use href="#cline"/></svg><span class="ml-[6px]">自定义线(X)</span><svg class="w-[12px] h-[12px] ml-auto" viewBox="0 0 12 12"><path d="M0 0h12v12H0zM4 0v12M8 0v12M0 4h4M8 4h4M0 8h4M8 8h4" fill="#d9ebfa" stroke="#3f86cc"/></svg></span></div>
        <div class="flex items-center h-4 pl-[32px]"><span class="w-[11px] border-t border-dotted border-[#888]"></span><svg class="w-[14px] h-[14px]"><use href="#csurf"/></svg><span class="ml-[6px]">自定义面</span></div>
        <div class="flex items-center h-4 pl-[32px]"><span class="w-[11px] border-t border-dotted border-[#888]"></span><svg class="w-[14px] h-[14px]"><use href="#dimtree"/></svg><span class="ml-[6px]">尺寸标注(W)</span></div>
      </div>

      <!-- tree scrollbars -->
      <div class="absolute right-[1px] top-0 flex flex-col w-[14px] h-[466px] bg-[#f0f0f0]">
        <svg class="w-[10px] h-[7px] mx-auto mt-[6px] rotate-180 shrink-0"><use href="#chev"/></svg>
        <div class="h-[364px] mt-[30px] bg-[#c8c8c8] shrink-0"></div>
        <svg class="w-[10px] h-[7px] mx-auto mt-auto mb-[6px] shrink-0"><use href="#chev"/></svg>
      </div>
      <div class="absolute left-0 right-0 top-[466px] flex items-center h-[18px] bg-[#f0f0f0]">
        <svg class="w-[7px] h-[9px] ml-[7px] rotate-180 shrink-0"><use href="#chevr"/></svg>
        <div class="w-[102px] h-[18px] ml-[5px] bg-[#c8c8c8] shrink-0"></div>
        <svg class="w-[7px] h-[9px] ml-[11px] shrink-0"><use href="#chevr"/></svg>
      </div>
      <svg class="absolute left-[48px] top-[453px] w-[12px] h-[16px]" viewBox="0 0 12 16"><path d="M1 1v12l3-3 2 5 2-1-2-5h4z" fill="#bdbdbd" stroke="#999"/></svg>
    </div>

    <div class="h-[2px] bg-[#f0f0f0]"></div>
    <div class="flex items-center justify-center h-[21px] mx-px bg-[#f0f0f0] border border-[#a0a0a0]">单构件输入</div>
    <div class="flex items-center justify-center h-[21px] mx-px mt-px bg-[#f0f0f0] border border-[#a0a0a0]">报表预览</div>
  </aside>

  <main class="flex flex-col w-[1200px] min-w-0 overflow-hidden [&>*]:shrink-0">
    <div class="flex flex-col h-[84px] ml-[5px] whitespace-nowrap">
      <!-- edit row -->
      <div class="flex items-center self-start h-[25px] w-[790px] pl-[4px] bg-[#f6f6f6] [&>*]:shrink-0">
        <svg class="w-[3px] h-5"><use href="#grip"/></svg>
        <svg class="w-[18px] h-4 ml-[5px]"><use href="#brush"/></svg>
        <span class="w-[24px]">删除</span>
        <span class="w-px h-4 ml-[8px] bg-[#ccc]"></span>
        <svg class="w-4 h-4 ml-[5px]"><use href="#copy"/></svg>
        <span class="w-[24px] ml-[4px]">复制</span>
        <svg class="w-4 h-4 ml-[8px]"><use href="#mirror"/></svg>
        <span class="w-[24px] ml-[3px]">镜像</span>
        <span class="w-px h-4 ml-[7px] bg-[#ccc]"></span>
        <svg class="w-4 h-4 ml-[6px]"><use href="#move"/></svg>
        <span class="w-[24px] ml-[3px]">移动</span>
        <svg class="w-[14px] h-[14px] ml-[8px]"><use href="#rotate"/></svg>
        <span class="w-[24px] ml-[4px]">旋转</span>
        <span class="w-px h-4 ml-[9px] bg-[#ccc]"></span>
        <svg class="w-4 h-4 ml-[5px]"><use href="#extend"/></svg>
        <span class="w-[24px] ml-[3px]">延伸</span>
        <svg class="w-4 h-4 ml-[8px]"><use href="#trim"/></svg>
        <span class="w-[24px] ml-[3px]">修剪</span>
        <span class="w-px h-4 ml-[7px] bg-[#ccc]"></span>
        <svg class="w-4 h-4 ml-[5px]"><use href="#break"/></svg>
        <span class="w-[24px] ml-[4px]">打断</span>
        <svg class="w-4 h-4 ml-[8px]"><use href="#merge"/></svg>
        <span class="w-[24px] ml-[4px]">合并</span>
        <svg class="w-4 h-4 ml-[7px]"><use href="#split"/></svg>
        <span class="w-[24px] ml-[3px] text-[#a8a8a8]">分割</span>
        <span class="w-px h-4 ml-[7px] bg-[#ccc]"></span>
        <svg class="w-[14px] h-4 ml-[6px]"><use href="#align"/></svg>
        <span class="w-[24px] ml-[5px]">对齐</span>
        <svg class="w-[6px] h-1 ml-[3px]"><use href="#caret"/></svg>
        <svg class="w-4 h-4 ml-[7px]"><use href="#offset"/></svg>
        <span class="w-[24px] ml-[3px]">偏移</span>
        <svg class="w-[14px] h-4 ml-[8px]"><use href="#stretch"/></svg>
        <span class="w-[24px] ml-[5px]">拉伸</span>
        <span class="w-px h-4 ml-[7px] bg-[#ccc]"></span>
        <svg class="w-4 h-4 ml-[5px]"><use href="#setgrip"/></svg>
        <span class="w-[48px] ml-[6px] text-[#a8a8a8]">设置夹点</span>
      </div>

      <!-- combo row -->
      <div class="flex items-center self-start h-[26px] w-[990px] pl-[4px] mt-[2px] bg-[#f6f6f6] [&>*]:shrink-0">
        <svg class="w-[3px] h-5"><use href="#grip"/></svg>
        <span class="flex items-center w-[57px] h-[22px] pl-[3px] ml-px bg-white"><span>首层</span><svg class="w-[6px] h-1 ml-auto mr-[2px]"><use href="#caret"/></svg></span>
        <span class="flex items-center w-[66px] h-[22px] pl-[2px] ml-[4px] bg-white"><span>自定义</span><svg class="w-[6px] h-1 ml-auto"><use href="#caret"/></svg></span>
        <span class="flex items-center w-[65px] h-[22px] pl-[2px] ml-[6px] bg-white"><span>自定义线</span><svg class="w-[6px] h-1 ml-auto"><use href="#caret"/></svg></span>
        <span class="flex items-center w-[69px] h-[22px] pl-[2px] ml-[7px] bg-white"><span>ZDYX-28</span><svg class="w-[6px] h-1 ml-auto mr-[3px]"><use href="#caret"/></svg></span>
        <span class="w-px h-4 ml-[6px] bg-[#ccc]"></span>
        <svg class="w-4 h-4 ml-[5px]"><use href="#prop"/></svg>
        <span class="w-[24px] ml-[3px]">属性</span>
        <span class="flex items-center w-[75px] h-[23px] ml-[4px] pl-[3px] border border-[#1f78b4] bg-[#e8f0f8]"><svg class="w-4 h-4"><use href="#edit"/></svg><span class="ml-[3px]">编辑钢筋</span></span>
        <svg class="w-4 h-4 ml-[4px]"><use href="#list"/></svg>
        <span class="w-[48px] ml-[3px]">构件列表</span>
        <svg class="w-4 h-4 ml-[9px]"><use href="#pick"/></svg>
        <span class="w-[48px] ml-[2px]">拾取构件</span>
        <svg class="w-[3px] h-5 ml-[9px]"><use href="#grip"/></svg>
        <svg class="w-4 h-4 ml-[6px]"><use href="#twopts"/></svg>
        <span class="w-[24px] ml-[3px]">两点</span>
        <svg class="w-4 h-4 ml-[8px]"><use href="#parallel"/></svg>
        <span class="w-[24px] ml-[3px]">平行</span>
        <svg class="w-4 h-4 ml-[8px]"><use href="#angle"/></svg>
        <span class="w-[24px] ml-[3px]">点角</span>
        <svg class="w-[6px] h-1 ml-[6px]"><use href="#caret"/></svg>
        <svg class="w-4 h-4 ml-[7px]"><use href="#arcaxis"/></svg>
        <span class="w-[48px] ml-[4px]">三点辅轴</span>
        <svg class="w-[6px] h-1 ml-[7px]"><use href="#caret"/></svg>
        <svg class="w-[18px] h-4 ml-[6px]"><use href="#brush"/></svg>
        <span class="w-[48px] ml-px">删除辅轴</span>
        <svg class="w-4 h-4 ml-[8px]"><use href="#dim"/></svg>
        <span class="w-[48px] ml-[4px]">尺寸标注</span>
        <svg class="w-[6px] h-1 ml-[6px]"><use href="#caret"/></svg>
      </div>

      <!-- draw row -->
      <div class="flex items-center self-start h-[27px] w-[500px] pl-[4px] mt-[2px] bg-[#f6f6f6] [&>*]:shrink-0">
        <svg class="w-[3px] h-5"><use href="#grip"/></svg>
        <span class="flex items-center w-[51px] h-[24px] ml-px pl-[5px] border border-[#1f78b4] bg-[#eaf2fa]"><svg class="w-[14px] h-[14px] shrink-0"><use href="#cursor"/></svg><span class="ml-[3px]">选择</span></span>
        <svg class="w-[6px] h-1 ml-[3px]"><use href="#caret"/></svg>
        <span class="w-px h-4 ml-[6px] bg-[#ccc]"></span>
        <svg class="w-[14px] h-[14px] ml-[7px]"><use href="#line"/></svg>
        <span class="w-[24px] ml-[4px]">直线</span>
        <svg class="w-4 h-4 ml-[8px]"><use href="#ptlen"/></svg>
        <span class="w-[48px] ml-[3px]">点加长度</span>
        <svg class="w-4 h-4 ml-[8px]"><use href="#arc3"/></svg>
        <span class="w-[48px] ml-[3px]">三点画弧</span>
        <svg class="w-[6px] h-1 ml-[6px]"><use href="#caret"/></svg>
        <span class="w-[50px] h-[22px] bg-white"></span>
        <svg class="w-[6px] h-1 ml-px"><use href="#caret"/></svg>
        <svg class="w-4 h-[14px] ml-[9px]"><use href="#rect"/></svg>
        <span class="w-[24px] ml-[3px]">矩形</span>
        <span class="w-px h-4 ml-[7px] bg-[#ccc]"></span>
        <svg class="w-[14px] h-[14px] ml-[5px]"><use href="#smart"/></svg>
        <span class="w-[48px] ml-[6px]">智能布置</span>
        <svg class="w-[6px] h-1 ml-[2px]"><use href="#caret"/></svg>
        <svg class="w-[3px] h-5 ml-[10px]"><use href="#grip"/></svg>
      </div>
    </div>

    <!-- 3d canvas -->
    <svg class="w-[1195px] h-[221px] ml-[5px] bg-black" viewBox="170 159 1195 221">
      <path d="M170 159H210L188 251L170 247z" fill="#9b9300"/>
      <path d="M333 159H411L407 175z" fill="#009900"/>
      <path d="M210 159L188 251" stroke="#8a2020"/>
      <path d="M208 254L400 175" stroke="#7a1818"/>
      <path d="M170 248L188 251L382 292L411 159H442L416 284L782 362L813 357L808 380H680L570 356L170 268z" fill="#00e600"/>
      <path d="M170 268L680 380H427L170 324z" fill="#009900"/>
      <path d="M170 324L427 380H170z" fill="#9b9300"/>
      <path d="M442 159H824L782 362L416 284z" fill="#9b9300"/>
      <path d="M414 289L582 325L580 336L412 299z" fill="#009900"/>
      <path d="M612 332L780 368L777 379L609 342z" fill="#009900"/>
      <path d="M607 159H657L817 194L815 205L639 167L602 341L587 338L625 163z" fill="#e6e000"/>
      <path d="M824 159H941L934 188L898 182L862 350L787 335z" fill="#0a78e6"/>
      <path d="M898 182L934 188L932 199L917 197L880 370L784 350L787 335L862 350z" fill="#0a5cb0"/>
      <path d="M870 260L880 262L878 268L870 266z" fill="#0a5cb0"/>
      <path d="M1023 159H1318L1307 212L1022 182z" fill="#009900"/>
      <path d="M1270 159H1318L1317 169z" fill="#00e600"/>
      <path d="M915 209L1365 308M1024 159L977 380M1307 212L1270 380" stroke="#e01020"/>
      <circle cx="979" cy="367" r="13" fill="none" stroke="#1f7a2a" stroke-dasharray="6 1"/>
      <text x="974.500" y="373" font-size="15" font-family="Liberation Sans" font-weight="bold" fill="#e8d8e0">A</text>
      <path d="M186 319L219 330" stroke="#00ff33" stroke-width="3"/>
      <path d="M176 320L192 318L190 325z" fill="#00ff33"/>
      <path d="M186 308L186 313M183 308L187 312L190 308" stroke="#60c060" fill="none"/>
      <path d="M212 296L219 302M219 296L212 302" stroke="#a03020" stroke-width="1.300"/>
      <path d="M225 329L231 305" stroke="#1080f0" stroke-width="4"/>
      <path d="M227 306L231 296L236 298L235 307z" fill="#1080f0"/>
    </svg>

    <!-- snap row -->
    <div class="flex items-center w-[888px] h-[30px] ml-[5px] pl-[4px] mt-px whitespace-nowrap bg-[#f6f6f6] [&>*]:shrink-0">
      <svg class="w-[3px] h-5"><use href="#grip"/></svg>
      <svg class="w-4 h-4 ml-[4px]"><use href="#ortho"/></svg>
      <span class="w-[24px] ml-[3px]">正交</span>
      <span class="flex items-center w-[75px] h-[25px] ml-[5px] pl-[3px] border border-[#1f78b4] bg-[#e2edf7]"><svg class="w-4 h-4 shrink-0"><use href="#snap"/></svg><span class="ml-[3px]">对象捕捉</span></span>
      <span class="flex items-center w-[75px] h-[25px] pl-[4px] border border-l-0 border-[#1f78b4] bg-[#e2edf7]"><svg class="w-4 h-4 shrink-0"><use href="#dyn"/></svg><span class="ml-[4px]">动态输入</span></span>
      <svg class="w-[3px] h-5 ml-[5px]"><use href="#grip"/></svg>
      <svg class="w-4 h-4 ml-[5px]"><use href="#cross"/></svg>
      <span class="w-[24px] ml-[3px]">交点</span>
      <span class="flex items-center w-[49px] h-[25px] ml-[6px] pl-px border border-[#1f78b4] bg-[#dbe9f6]"><svg class="w-4 h-4 shrink-0"><use href="#perp"/></svg><span class="ml-[4px]">垂点</span></span>
      <span class="flex items-center w-[51px] h-[25px] pl-[3px] border border-l-0 border-[#1f78b4] bg-[#dbe9f6]"><svg class="w-4 h-4 shrink-0"><use href="#mid"/></svg><span class="ml-[6px]">中点</span></span>
      <svg class="w-4 h-4 ml-[6px]"><use href="#vertex"/></svg>
      <span class="w-[24px] ml-[2px]">顶点</span>
      <svg class="w-4 h-4 ml-[8px]"><use href="#coord"/></svg>
      <span class="w-[24px] ml-[3px]">坐标</span>
      <svg class="w-[3px] h-5 ml-[7px]"><use href="#grip"/></svg>
      <span class="flex items-center w-[44px] h-[24px] ml-[3px] pl-[3px] bg-white">不偏移</span>
      <svg class="w-[6px] h-1 ml-[6px]"><use href="#caret"/></svg>
      <span class="w-px h-4 ml-[5px] bg-[#ccc]"></span>
      <span class="w-[19px] ml-[5px] text-[#888] text-[13px]">X=</span>
      <span class="flex items-center w-[58px] h-[24px] pr-[3px] border border-[#555] bg-[#f0f0f0] text-[#777] text-[13px]"><span class="ml-auto">0</span><span class="flex flex-col items-center gap-[7px] w-[11px] ml-[7px]"><svg class="w-[6px] h-1 rotate-180"><use href="#caret"/></svg><svg class="w-[6px] h-1"><use href="#caret"/></svg></span></span>
      <span class="w-[24px] ml-px text-[#666] text-[13px]">mm</span>
      <span class="w-[18px] ml-[3px] text-[#888] text-[13px]">Y=</span>
      <span class="flex items-center w-[58px] h-[24px] pr-[3px] border border-[#555] bg-[#f0f0f0] text-[#777] text-[13px]"><span class="ml-auto">0</span><span class="flex flex-col items-center gap-[7px] w-[11px] ml-[7px]"><svg class="w-[6px] h-1 rotate-180"><use href="#caret"/></svg><svg class="w-[6px] h-1"><use href="#caret"/></svg></span></span>
      <span class="w-[24px] ml-px text-[#666] text-[13px]">mm</span>
      <span class="w-px h-4 ml-px bg-[#ccc]"></span>
      <span class="w-[11px] h-[11px] ml-[5px] border border-[#777] bg-white"></span>
      <span class="w-[24px] ml-[8px]">旋转</span>
      <span class="flex items-center w-[67px] h-[24px] ml-[5px] pr-[3px] border border-[#555] bg-[#f0f0f0] text-[#777] text-[13px]"><span class="ml-auto">0.000</span><span class="flex flex-col items-center gap-[7px] w-[11px] ml-[5px]"><svg class="w-[6px] h-1 rotate-180"><use href="#caret"/></svg><svg class="w-[6px] h-1"><use href="#caret"/></svg></span></span>
      <span class="ml-[3px] text-[#666]">°</span>
    </div>

    <div class="h-[4px]"></div>

    <!-- rebar editor -->
    <section class="flex h-[274px] ml-[5px]">
      <div class="flex flex-col w-[12px] shrink-0 bg-[radial-gradient(#bbb_1px,transparent_1px)] bg-[length:4px_4px]">
        <svg class="w-[10px] h-[10px] ml-px mt-px bg-[#f0f0f0]" viewBox="0 0 10 10"><path d="M.5.500h9v9h-9zM2 2l6 6M8 2L2 8" fill="none" stroke="#555"/></svg>
      </div>
      <div class="flex flex-col flex-1 min-w-0 bg-white">
        <div class="flex items-center h-[23px] pl-[6px] whitespace-nowrap bg-[#f8f8f8] text-[#999] [&>*]:shrink-0">
          <svg class="w-[12px] h-[12px]"><use href="#first"/></svg>
          <svg class="w-[12px] h-[12px] ml-[12px]"><use href="#prev"/></svg>
          <svg class="w-[12px] h-[12px] ml-[11px]"><use href="#next"/></svg>
          <svg class="w-[12px] h-[12px] ml-[11px]"><use href="#last"/></svg>
          <span class="w-px h-4 ml-[9px] bg-[#ccc]"></span>
          <svg class="w-[12px] h-[12px] ml-[6px]"><use href="#up"/></svg>
          <svg class="w-[12px] h-[12px] ml-[11px]"><use href="#down"/></svg>
          <span class="w-px h-4 ml-[12px] bg-[#ccc]"></span>
          <svg class="w-4 h-4 ml-[4px]"><use href="#ins"/></svg>
          <span class="w-[24px] ml-[3px]">插入</span>
          <svg class="w-4 h-4 ml-[7px]"><use href="#del"/></svg>
          <span class="w-[24px] ml-[3px]">删除</span>
          <svg class="w-4 h-4 ml-[10px]"><use href="#scale"/></svg>
          <span class="w-[48px] ml-[2px]">缩尺配筋</span>
          <svg class="w-4 h-4 ml-[7px]"><use href="#info"/></svg>
          <span class="w-[48px] ml-[4px]">钢筋信息</span>
          <svg class="w-4 h-4 ml-[7px]"><use href="#lib"/></svg>
          <span class="w-[48px] ml-[4px] text-[#222]">钢筋图库</span>
          <svg class="w-4 h-4 ml-[7px]"><use href="#other"/></svg>
          <span class="w-[24px] ml-[4px] text-[#222]">其他</span>
          <svg class="w-[6px] h-1 ml-[3px]"><use href="#caret"/></svg>
          <span class="w-[24px] ml-[8px] text-[#222]">关闭</span>
          <span class="w-px h-4 ml-[8px] bg-[#ccc]"></span>
          <span class="ml-[6px] text-[#222]">单构件钢筋总重(kg)：0</span>
        </div>
        <div class="h-[3px] shrink-0"></div>
        <div class="grid grid-cols-[34px_73px_56px_35px_33px_202px_165px_157px_60px_38px_39px_50px_61px_60px_72px_75px] w-[1183px] shrink-0 text-center whitespace-nowrap overflow-hidden text-[#333]">
          <div class="h-[20px] bg-gradient-to-b from-[#f9f9f9] to-[#e9e9e9] border-y border-r border-[#b8b8b8]"></div>
          <div class="h-[20px] leading-[18px] bg-gradient-to-b from-[#fbe3ab] to-[#f5bd62] border-y border-r border-[#b8b8b8] text-[#a8481a]">筋号</div>
          <div class="h-[20px] leading-[18px] bg-gradient-to-b from-[#f9f9f9] to-[#e9e9e9] border-y border-r border-[#b8b8b8]">直径(mm)</div>
          <div class="h-[20px] leading-[18px] bg-gradient-to-b from-[#f9f9f9] to-[#e9e9e9] border-y border-r border-[#b8b8b8]">级别</div>
          <div class="h-[20px] leading-[18px] bg-gradient-to-b from-[#f9f9f9] to-[#e9e9e9] border-y border-r border-[#b8b8b8]">图号</div>
          <div class="h-[20px] leading-[18px] bg-gradient-to-b from-[#f9f9f9] to-[#e9e9e9] border-y border-r border-[#b8b8b8]">图形</div>
          <div class="h-[20px] leading-[18px] bg-gradient-to-b from-[#f9f9f9] to-[#e9e9e9] border-y border-r border-[#b8b8b8]">计算公式</div>
          <div class="h-[20px] leading-[18px] bg-gradient-to-b from-[#f9f9f9] to-[#e9e9e9] border-y border-r border-[#b8b8b8]">公式描述</div>
          <div class="h-[20px] leading-[18px] bg-gradient-to-b from-[#f9f9f9] to-[#e9e9e9] border-y border-r border-[#b8b8b8]">长度(mm)</div>
          <div class="h-[20px] leading-[18px] bg-gradient-to-b from-[#f9f9f9] to-[#e9e9e9] border-y border-r border-[#b8b8b8]">根数</div>
          <div class="h-[20px] leading-[18px] bg-gradient-to-b from-[#f9f9f9] to-[#e9e9e9] border-y border-r border-[#b8b8b8]">搭接</div>
          <div class="h-[20px] leading-[18px] bg-gradient-to-b from-[#f9f9f9] to-[#e9e9e9] border-y border-r border-[#b8b8b8]">损耗(%)</div>
          <div class="h-[20px] leading-[18px] bg-gradient-to-b from-[#f9f9f9] to-[#e9e9e9] border-y border-r border-[#b8b8b8]">单重(kg)</div>
          <div class="h-[20px] leading-[18px] bg-gradient-to-b from-[#f9f9f9] to-[#e9e9e9] border-y border-r border-[#b8b8b8]">总重(kg)</div>
          <div class="h-[20px] leading-[18px] bg-gradient-to-b from-[#f9f9f9] to-[#e9e9e9] border-y border-r border-[#b8b8b8]">钢筋归类</div>
          <div class="h-[20px] leading-[18px] bg-gradient-to-b from-[#f9f9f9] to-[#e9e9e9] border-y border-[#b8b8b8] overflow-hidden">搭接形式</div>

          <div class="h-[20px] leading-[19px] bg-[#fde8c4] border-b border-r border-[#b8b8b8] text-[#8a5a20]">1*</div>
          <div class="h-[20px] bg-[#d3e4f5] border-b border-r-2 border-b-[#b8b8b8] border-r-black"></div>
          <div class="h-[20px] border-b border-r border-[#c8c8c8]"></div>
          <div class="h-[20px] border-b border-r border-[#c8c8c8]"></div>
          <div class="h-[20px] border-b border-r border-[#c8c8c8]"></div>
          <div class="h-[20px] border-b border-r border-[#c8c8c8]"></div>
          <div class="h-[20px] border-b border-r border-[#c8c8c8]"></div>
          <div class="h-[20px] border-b border-r border-[#c8c8c8]"></div>
          <div class="h-[20px] border-b border-r border-[#c8c8c8]"></div>
          <div class="h-[20px] border-b border-r border-[#c8c8c8]"></div>
          <div class="h-[20px] border-b border-r border-[#c8c8c8]"></div>
          <div class="h-[20px] border-b border-r border-[#c8c8c8]"></div>
          <div class="h-[20px] border-b border-r border-[#c8c8c8]"></div>
          <div class="h-[20px] border-b border-r border-[#c8c8c8]"></div>
          <div class="h-[20px] border-b border-r border-[#c8c8c8]"></div>
          <div class="h-[20px] border-b border-[#c8c8c8]"></div>
        </div>
        <div class="flex-1"></div>
        <div class="flex items-center h-[9px] shrink-0 bg-[#efefef]">
          <svg class="w-[6px] h-[8px] ml-[7px] rotate-180 shrink-0"><use href="#chevr"/></svg>
          <div class="w-[823px] h-[9px] ml-[6px] bg-[#c9c9c9] shrink-0"></div>
        </div>
      </div>
    </section>
  </main>
</div>

<!-- input method bar, floats over the title -->
<div class="absolute left-[578px] top-0 flex items-center w-[207px] h-[17px] bg-white border-b border-[#ccc] [&>*]:shrink-0">
  <svg class="w-[22px] h-[18px] ml-[7px] -mt-[4px]" viewBox="0 0 24 18"><path d="M3 9C2 3 9 0 22 0l-1 4C13 4 10 5 10 6c6 0 13 1 12 6-1 5-9 6-20 6l2-5c8 0 11 0 11-1-5 0-11-1-12-3z" fill="#ef4a14"/></svg>
  <span class="w-[13px] ml-[12px] text-[19px] leading-[17px] text-[#2c7fd2]">A</span>
  <svg class="w-[14px] h-[14px] ml-[4px]" viewBox="0 0 13 14"><path d="M6 0c6 3 7 10 1 13-3 1-6 0-7-2 5 0 8-5 6-11z" fill="#2c7fd2"/></svg>
  <svg class="w-[8px] h-[10px] ml-[8px]" viewBox="0 0 8 10"><circle cx="2" cy="2" r="1.500" fill="#2c7fd2"/><circle cx="6" cy="6" r="1.500" fill="#2c7fd2"/></svg>
  <svg class="w-[12px] h-[15px] ml-[14px]" viewBox="0 0 12 15"><rect x="3" y="0" width="6" height="9" rx="3" fill="#2c7fd2"/><path d="M1 6c0 6 10 6 10 0M6 10v4M3 14h6" fill="none" stroke="#2c7fd2"/></svg>
  <svg class="w-[16px] h-[12px] ml-[8px]" viewBox="0 0 16 12"><rect width="16" height="12" rx="2" fill="#2c7fd2"/><path d="M2 3h12M2 6h12M4 9h8" stroke="#fff" stroke-dasharray="2 1"/></svg>
  <svg class="w-[14px] h-[14px] ml-[9px]" viewBox="0 0 14 14"><circle cx="5" cy="4" r="3" fill="#bbb"/><path d="M0 13c0-4 2-5 5-5s5 1 5 5z" fill="#bbb"/><path d="M9 9h5v5H9z" fill="#ddd"/></svg>
  <svg class="w-[15px] h-[13px] ml-[6px]" viewBox="0 0 14 13"><path d="M4 0h6l4 3-2 3-1-1v8H3V5L2 6 0 3z" fill="#2c7fd2"/></svg>
  <svg class="w-[15px] h-[14px] ml-[7px]" viewBox="0 0 14 14"><path d="M13 3l-3 3-2-2 3-3c-3-1-5 1-5 4L1 10c-1 2 1 4 3 3l5-5c3 0 5-2 4-5z" fill="#2c7fd2"/></svg>
</div>

<!-- green badge, hangs from the top edge -->
<div class="absolute left-[942px] top-[-36px] w-[44px] h-[44px] rounded-full bg-[#3fa35c] border-2 border-[#cfe6d4] shadow-md"></div>

<!-- floating popup -->
<div class="absolute left-[1100px] top-[144px] w-[52px]">
  <div class="flex items-center h-[26px] pl-[3px] bg-white text-[#aaa] text-[13px]">
    <span>Poi...</span>
    <span class="w-[18px] h-[18px] ml-auto mr-[2px] bg-[#e0e0e0]"></span>
  </div>
  <button class="block w-[50px] h-[21px] mx-px bg-[#f0f0f0] border border-t-white border-l-white border-r-[#777] border-b-[#777] border-b-2 text-[13px] leading-4 text-black">开始</button>
</div>
</body>
</html>
